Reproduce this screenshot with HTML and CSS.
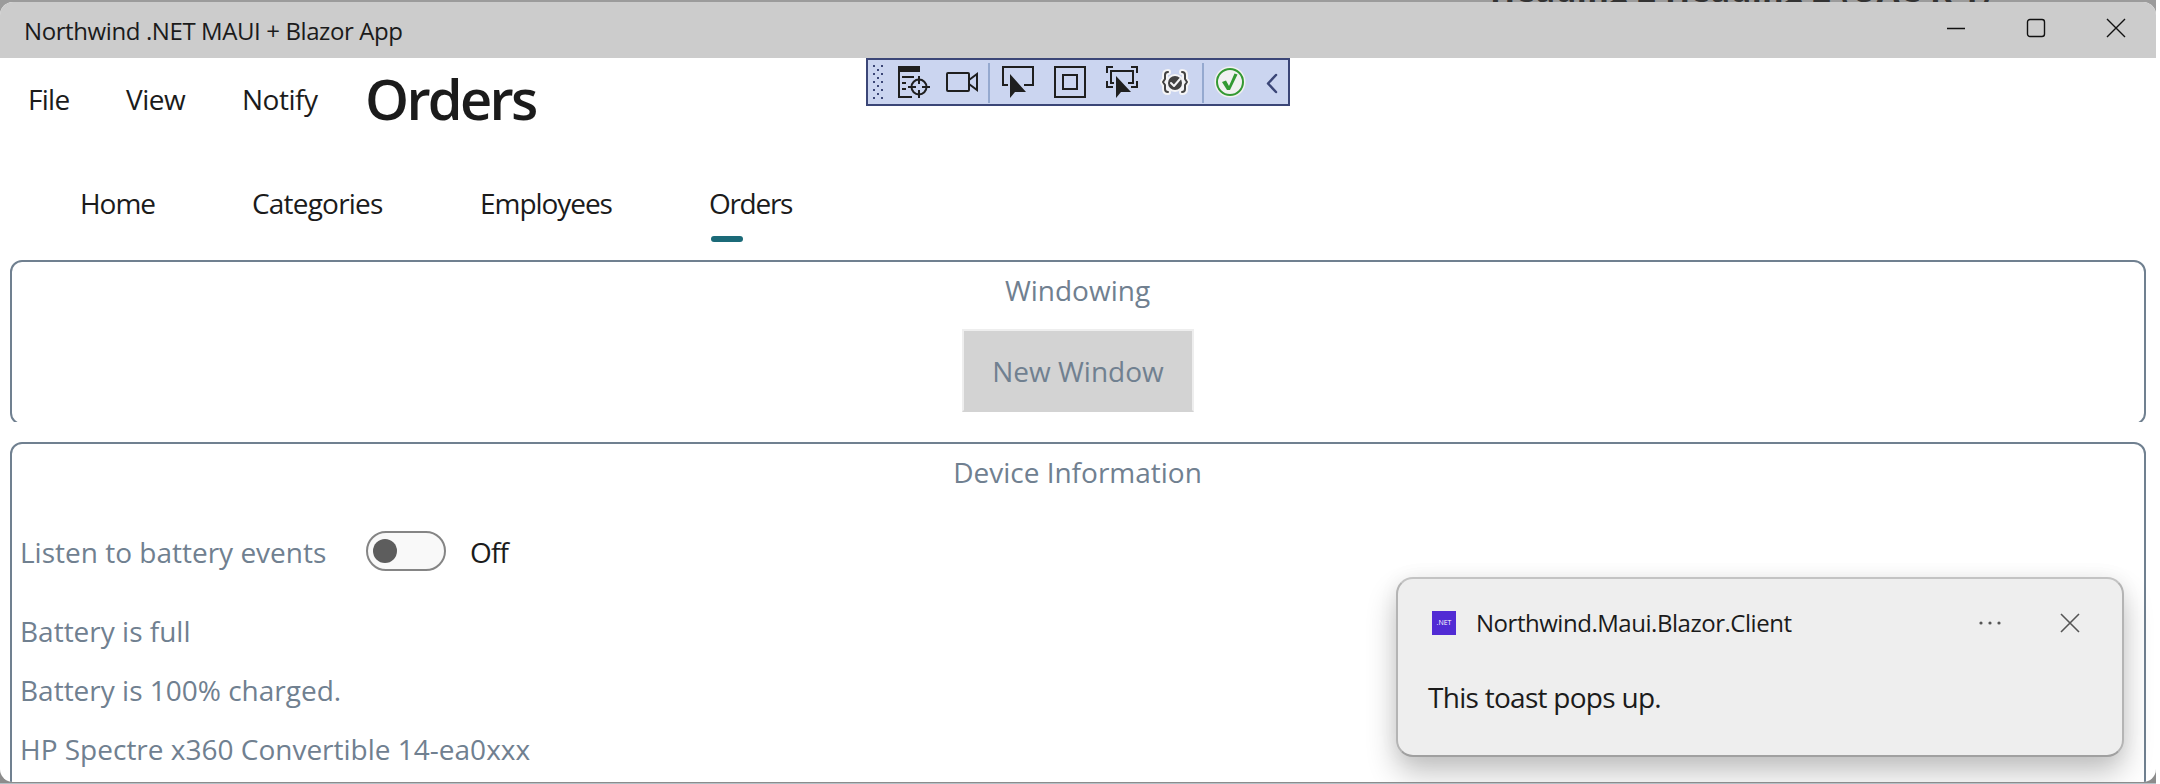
FILE: index.html
```html
<!DOCTYPE html>
<html lang="en">
<head>
<meta charset="utf-8">
<title>Northwind .NET MAUI + Blazor App</title>
<link rel="stylesheet" href="styles.css">
</head>
<body>
<div class="backdrop"><span class="behind">Heading 2 Heading 2 (UAC R 1)</span></div>
<div class="window">
  <header class="titlebar">
    <span class="title">Northwind .NET MAUI + Blazor App</span>
    <div class="controls">
      <svg width="20" height="20" viewBox="0 0 20 20"><path d="M1 10.5H19"/></svg>
      <svg width="20" height="20" viewBox="0 0 20 20"><rect x="1.5" y="1.5" width="17" height="17" rx="2.5"/></svg>
      <svg width="20" height="20" viewBox="0 0 20 20"><path d="M1 1L19 19M19 1L1 19"/></svg>
    </div>
  </header>
  <div class="menubar">
    <span class="file">File</span><span class="view">View</span><span class="notify">Notify</span>
    <h1>Orders</h1>
  </div>
  <nav class="tabs">
    <span class="home">Home</span><span class="cat">Categories</span><span class="emp">Employees</span><span class="ord">Orders</span>
  </nav>
  <section class="clip">
    <div class="panel first">
      <div class="heading">Windowing</div>
      <button class="newwin">New Window</button>
    </div>
  </section>
  <section class="panel second">
    <div class="heading">Device Information</div>
    <div class="switchrow"><span>Listen to battery events</span><i class="toggle"></i><span class="off">Off</span></div>
    <p>Battery is full</p>
    <p>Battery is 100% charged.</p>
    <p>HP Spectre x360 Convertible 14-ea0xxx</p>
  </section>
  <div class="toast">
    <div class="toasthead">
      <span class="logo">.NET</span>
      <span class="app">Northwind.Maui.Blazor.Client</span>
      <svg class="more" width="24" height="6" viewBox="0 0 24 6"><circle cx="3" cy="3" r="1.6"/><circle cx="12" cy="3" r="1.6"/><circle cx="21" cy="3" r="1.6"/></svg>
      <svg class="close" width="20" height="20" viewBox="0 0 20 20"><path d="M1 1L19 19M19 1L1 19"/></svg>
    </div>
    <div class="message">This toast pops up.</div>
  </div>
</div>
<svg class="devbar" width="424" height="48" viewBox="0 0 424 48">
  <defs><pattern id="grip" x="6" y="6" width="8" height="8" patternUnits="userSpaceOnUse"><path d="M1 1h2v2H1zM5 5h2v2H5z" fill="#3b4677"/></pattern></defs>
  <rect x="1" y="1" width="422" height="46" fill="#cbd5f0" stroke="#3b4677" stroke-width="2"/>
  <rect x="6" y="6" width="12" height="36" fill="url(#grip)"/>
  <path d="M123 5V45M337 5V45" stroke="#95a9cf" stroke-width="2"/>
  <g fill="none" stroke="#1f1f1f" stroke-width="2">
    <path d="M32 8h22v6H32z" fill="#1f1f1f" stroke="none"/>
    <path d="M33 13V39H46M36 19H48M36 25H40M36 31H40"/>
    <circle cx="53" cy="29" r="7.5"/><path d="M53 18V26M53 32V40M42 29H50M56 29H64"/>
    <rect x="81" y="15" width="22" height="18" rx="1"/><path d="M103 22L111 16V32L103 26"/>
    <path d="M142 27H137V9H167V27H158"/><path d="M144 16V40L149 34H160Z" fill="#1f1f1f" stroke="none"/>
    <path d="M189 9H219V39H189ZM197 17H211V31H197Z"/>
    <path d="M247 9H241V15M265 9H271V15M241 23V29H247M271 23V29H265M248 25H245V13H267V25H262"/><path d="M250 18V40L255 34H265Z" fill="#1f1f1f" stroke="none"/>
  </g>
  <g fill="none" stroke-linecap="round" stroke-linejoin="round">
    <g stroke="#f4f4f6" stroke-width="6"><path d="M302 14Q299 14 299 17V21L297 24L299 27V31Q299 34 302 34M316 14Q319 14 319 17V21L321 24L319 27V31Q319 34 316 34"/><circle cx="309" cy="25" r="6" fill="#f4f4f6"/></g>
    <path d="M302 14Q299 14 299 17V21L297 24L299 27V31Q299 34 302 34M316 14Q319 14 319 17V21L321 24L319 27V31Q319 34 316 34" stroke="#424242" stroke-width="2"/>
    <circle cx="309" cy="25" r="7" fill="#424242"/><path d="M305 25L308 28L314 21" stroke="#f4f4f6" stroke-width="2"/>
    <circle cx="364" cy="24" r="15.5" fill="#f1f1f1"/><circle cx="364" cy="24" r="13" stroke="#339933" stroke-width="2"/>
    <path d="M356 24L360 22.5L363 28L368.500 15.500L371.500 16.500L364 32L361 32Z" fill="#339933"/>
    <path d="M410 17L402 25.500L410 34" stroke="#3b4677" stroke-width="2.500"/>
  </g>
</svg>
</body>
</html>
```
FILE: styles.css
```css
* { box-sizing: border-box; }
body { margin: 0; width: 2160px; height: 784px; overflow: hidden; position: relative; background: #fff; font: 28px/38px "Open Sans", "Noto Sans", sans-serif; color: #1b1b1b; }
.backdrop { position: absolute; left: 0; top: 0; width: 2156px; height: 784px; background: linear-gradient(#9b9b9b 0 50%, #8c8c8c 50% calc(100% - 1px), #b4c0c6 0); overflow: hidden; }
.behind { position: absolute; left: 1490px; top: -29px; font-weight: 700; font-size: 33px; letter-spacing: .3px; white-space: pre; color: #333; }
.window { position: relative; width: 2156px; height: 780px; margin-top: 2px; background: #fff; border-radius: 13px; overflow: hidden; }
.titlebar { height: 56px; background: #ccc; display: flex; justify-content: space-between; padding: 9px 30px 0 24px; }
.title { font-size: 24px; line-height: 40px; letter-spacing: -.4px; white-space: nowrap; }
.controls { display: flex; gap: 60px; padding-top: 7px; }
svg { display: block; flex: none; }
.controls svg { fill: none; stroke: #111; stroke-width: 1.4; }
.menubar { height: 106px; display: flex; padding-left: 28px; letter-spacing: -.5px; }
.menubar span { padding-top: 22px; white-space: nowrap; }
.file { width: 98px; letter-spacing: -.7px; }
.view { width: 116px; }
.notify { width: 123px; }
h1 { margin: 0; font-size: 56px; line-height: 76px; font-weight: 600; letter-spacing: -2.7px; padding-top: 2px; }
.tabs { height: 94px; padding: 20px 0 0 80px; display: flex; letter-spacing: -1.05px; }
.home { width: 172px; }
.cat { width: 228px; letter-spacing: -.8px; }
.emp { width: 229px; }
.ord { letter-spacing: -1.3px; }
.ord::after { content: ""; display: block; width: 32px; height: 6px; margin: 14px 0 0 2px; border-radius: 3px; background: #1b6a78; }
.clip { height: 162px; margin-top: 2px; overflow: hidden; }
.panel { margin: 0 10px; border: 2px solid #708090; border-radius: 12px; color: #708090; }
.first { height: 165px; }
.heading { text-align: center; padding: 9px 1px 0 0; height: 67px; }
.newwin { display: block; margin: 0 auto; width: 232px; height: 83px; font: inherit; color: inherit; background: #d3d3d3; border: 2px solid #eee; border-bottom-color: #d3d3d3; padding: 0; }
.second { height: 500px; margin-top: 20px; }
.switchrow { height: 59px; padding-left: 8px; display: flex; margin-top: 22px; }
.switchrow span:first-child { width: 346px; }
.toggle { width: 80px; height: 40px; margin-top: -2px; border: 2px solid #858585; border-radius: 20px; background: #f9f9f9; padding: 6px 5px; }
.toggle::before { content: ""; display: block; width: 24px; height: 24px; border-radius: 50%; background: #5d5d5d; }
.off { color: #1b1b1b; margin-left: 24px; letter-spacing: -.8px; }
.second p { margin: 20px 0 21px 8px; }
.toast { position: absolute; left: 1396px; top: 575px; width: 728px; height: 180px; border: 2px solid #b4b4b4; border-top-color: #c3c3c3; border-bottom-color: #a0a0a0; border-radius: 17px; background: #eee; box-shadow: 0 16px 30px rgba(0,0,0,.24), 0 0 20px rgba(0,0,0,.05); }
.toasthead { display: flex; align-items: center; padding: 25px 42px 0 34px; height: 63px; }
.logo { width: 24px; height: 24px; background: #512bd4; color: #fff; font-size: 7px; line-height: 24px; text-align: center; }
.app { margin-left: 20px; font-size: 24px; letter-spacing: -.47px; }
.more { margin-left: auto; fill: #555; }
.close { margin-left: 58px; fill: none; stroke: #555; stroke-width: 1.6; }
.message { padding: 36px 0 0 30px; letter-spacing: -.72px; }
.devbar { position: absolute; left: 866px; top: 58px; }
```
